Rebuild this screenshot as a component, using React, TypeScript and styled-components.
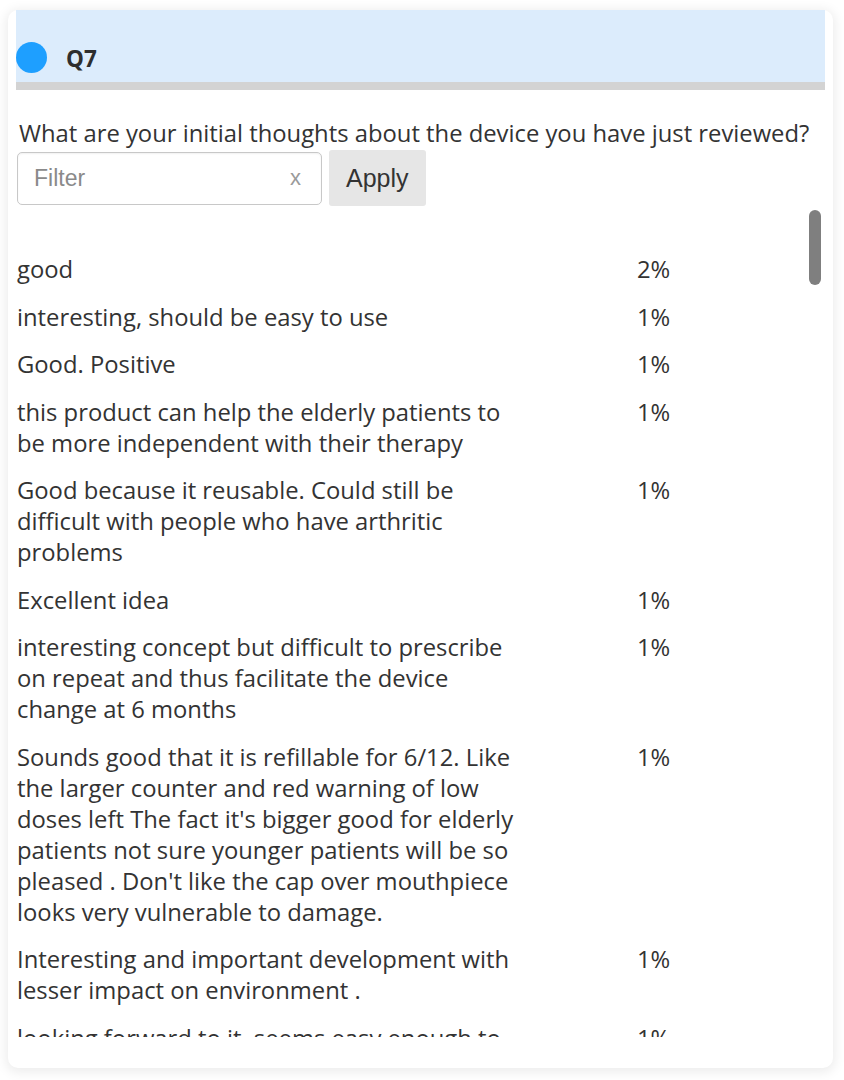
import React from "react";
import styled, { createGlobalStyle } from "styled-components";

const GlobalStyle = createGlobalStyle`
  html, body {
    margin: 0;
    background: #ffffff;
  }
  body {
    padding: 10px 11px 12px 8px;
    font-family: "Open Sans", "Liberation Sans", sans-serif;
    color: #333333;
  }
`;

const StyledCard = styled.section`
  width: 825px;
  height: 1058px;
  box-sizing: border-box;
  padding: 0 8px;
  border-radius: 10px;
  background: #ffffff;
  box-shadow: 0 2px 12px 2px rgb(0 0 0 / 8%);
  display: flex;
  flex-direction: column;
`;

const StyledHeader = styled.header`
  background: #dcecfc;
  border-bottom: 8px solid #d3d3d3;
  display: flex;
  align-items: center;
  gap: 19px;
  padding-top: 22px;
  height: 50px;
`;

const StyledDot = styled.span`
  width: 31px;
  height: 31px;
  border-radius: 50%;
  background: #1e9fff;
`;

const StyledTitle = styled.h2`
  margin: 2px 0 0;
  font-size: 22.5px;
  font-weight: 700;
  color: #2e2e2e;
`;

const StyledQuestion = styled.p`
  margin: 28px 0 0 3px;
  font-size: 23.8px;
  line-height: 31px;
  white-space: nowrap;
`;

const StyledFilterBar = styled.div`
  display: flex;
  align-items: center;
  gap: 7px;
  margin-top: 1px;
  margin-left: 1px;
`;

const StyledInputBox = styled.label`
  width: 305px;
  height: 53px;
  box-sizing: border-box;
  border: 1px solid #c8c8c8;
  border-radius: 5px;
  box-shadow: inset 0 1px 2px rgb(0 0 0 / 6%);
  display: flex;
  align-items: center;
  padding: 0 20px 0 16px;
  font-family: "Liberation Sans", Arial, sans-serif;
`;

const StyledInput = styled.input`
  flex: 1;
  min-width: 0;
  border: none;
  outline: none;
  background: transparent;
  font-family: inherit;
  font-size: 23px;
  color: #333;
  padding: 0;
  &::placeholder {
    color: #8a8a8a;
  }
`;

const StyledClear = styled.span`
  font-size: 22px;
  color: #9a9a9a;
`;

const StyledButton = styled.button`
  height: 56px;
  padding: 0 17px;
  border: none;
  border-radius: 3px;
  background: #e6e6e6;
  color: #333;
  font-family: "Liberation Sans", Arial, sans-serif;
  font-size: 25px;
`;

const StyledListArea = styled.div`
  margin-top: 4px;
  height: 827px;
  display: flex;
`;

const StyledList = styled.div`
  flex: 1;
  overflow: hidden;
  padding-top: 36px;
  display: grid;
  grid-template-columns: 510px 60px;
  column-gap: 110px;
  align-content: start;
  font-size: 23.8px;
  line-height: 31px;
`;

const StyledCell = styled.div`
  padding: 8.25px 0 8.25px 1px;
`;

const StyledTrack = styled.div`
  width: 12px;
  margin-right: 4px;
`;

const StyledThumb = styled.div`
  width: 12px;
  height: 75px;
  border-radius: 6px;
  background: #7f7f7f;
`;

const answers: [string, string][] = [
  ["good", "2%"],
  ["interesting, should be easy to use", "1%"],
  ["Good. Positive", "1%"],
  ["this product can help the elderly patients to be more independent with their therapy", "1%"],
  ["Good because it reusable. Could still be difficult with people who have arthritic problems", "1%"],
  ["Excellent idea", "1%"],
  ["interesting concept but difficult to prescribe on repeat and thus facilitate the device change at 6 months", "1%"],
  [
    "Sounds good that it is refillable for 6/12. Like the larger counter and red warning of low doses left The fact it's bigger good for elderly patients not sure younger patients will be so pleased . Don't like the cap over mouthpiece looks very vulnerable to damage.",
    "1%",
  ],
  ["Interesting and important development with lesser impact on environment .", "1%"],
  ["looking forward to it, seems easy enough to use", "1%"],
];

export default function App() {
  return (
    <>
      <GlobalStyle />
      <StyledCard>
        <StyledHeader>
          <StyledDot />
          <StyledTitle>Q7</StyledTitle>
        </StyledHeader>
        <StyledQuestion>
          What are your initial thoughts about the device you have just reviewed?
        </StyledQuestion>
        <StyledFilterBar>
          <StyledInputBox>
            <StyledInput placeholder="Filter" />
            <StyledClear>x</StyledClear>
          </StyledInputBox>
          <StyledButton>Apply</StyledButton>
        </StyledFilterBar>
        <StyledListArea>
          <StyledList>
            {answers.map(([text, pct], i) => (
              <React.Fragment key={i}>
                <StyledCell>{text}</StyledCell>
                <StyledCell>{pct}</StyledCell>
              </React.Fragment>
            ))}
          </StyledList>
          <StyledTrack>
            <StyledThumb />
          </StyledTrack>
        </StyledListArea>
      </StyledCard>
    </>
  );
}
